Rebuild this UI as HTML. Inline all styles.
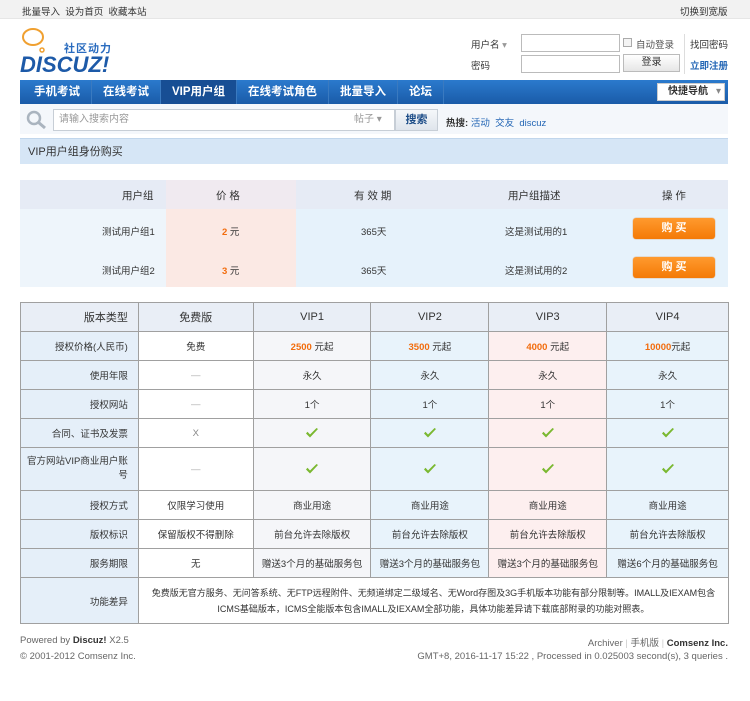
<!DOCTYPE html>
<html><head><meta charset="utf-8">
<style>
*{margin:0;padding:0;box-sizing:border-box}
body{width:750px;height:701px;background:#fff;font-family:"Liberation Sans","Noto Sans CJK SC",sans-serif;font-size:10px;color:#333;position:relative;overflow:hidden}
.a{position:absolute}
#top{left:0;top:0;width:750px;height:19px;background:#f2f2f2;border-bottom:1px solid #e6e6e6}
a{color:#333;text-decoration:none}
.nav{left:20px;top:80px;width:708px;height:24px;background:linear-gradient(#2b7acd,#1a5ba8);}
.nav span{float:left;color:#fff;font-weight:bold;font-size:11.5px;line-height:24px;padding:0 11px;border-right:1px solid #3a7ac0}
.nav span.on{background:#174e94}
.sb{left:20px;top:104px;width:708px;height:30px;background:#f4f7fb;}
input{border:1px solid #bbb;background:#fff}
table{border-collapse:collapse}
.t2{left:20px;top:302px;width:709px}
.t2 td{border:1px solid #a0a0a0;text-align:center;font-size:9.5px;height:29px;color:#333}
.t2 td.l{text-align:right;padding-right:10px;background:#e5eff9}
.t2 tr.h td{font-weight:normal;font-size:11px}
.c0{background:#fff}.c1{background:#f5f6f9}.c2{background:#e8f3fb}.c3{background:#fdefef}.c4{background:#e8f3fb}
.o{color:#f26c0d;font-weight:bold}
.ck svg{display:block;margin:0 auto}
.btn{display:inline-block;width:82px;height:21px;background:linear-gradient(#ff9a2e,#f47a06);border-radius:3px;color:#fff;font-weight:bold;line-height:21px;font-size:11px;box-shadow:0 0 1px #c60}
</style></head><body>
<svg width="0" height="0" style="position:absolute"><defs><symbol id="ck" viewBox="0 0 14 12"><path d="M1 6.5 L5 10.5 L13 2 L11.5 1 L5 7.5 L2.5 4.8 Z" fill="#7ab830"/></symbol></defs></svg>
<div id="top" class="a"></div>
<div class="a" style="left:22px;top:4px;font-size:9.5px">批量导入&nbsp; 设为首页&nbsp; 收藏本站</div>
<div class="a" style="left:680px;top:4px;font-size:9.5px">切换到宽版</div>
<svg class="a" style="left:20px;top:26px" width="100" height="50">
<ellipse cx="13" cy="11" rx="10" ry="8" fill="none" stroke="#f0a030" stroke-width="2"/>
<circle cx="22" cy="24" r="2" fill="none" stroke="#f0a030" stroke-width="1.5"/>
<text x="44" y="26" fill="#2a6cbf" font-size="11" font-weight="bold" font-family="Liberation Sans,Noto Sans CJK SC,sans-serif" letter-spacing="1">社区动力</text>
<text x="0" y="46" fill="#1d5aa8" font-size="22" font-weight="bold" font-style="italic" font-family="Liberation Sans,sans-serif">DISCUZ!</text>
</svg>
<div class="a" style="left:471px;top:37px;font-size:9.5px">用户名 <span style="color:#999">▾</span></div>
<div class="a" style="left:471px;top:58px;font-size:9.5px">密码</div>
<input class="a" style="left:521px;top:34px;width:99px;height:18px">
<input class="a" style="left:521px;top:55px;width:99px;height:18px">
<div class="a" style="left:623px;top:38px;width:9px;height:9px;border:1px solid #aaa;background:#f4f4f4"></div>
<div class="a" style="left:636px;top:37px;font-size:9.5px;color:#555">自动登录</div>
<div class="a" style="left:684px;top:34px;height:40px;border-left:1px solid #ddd"></div>
<div class="a" style="left:690px;top:37px;font-size:9.5px">找回密码</div>
<div class="a" style="left:690px;top:58px;font-size:9.5px;color:#2366b5;font-weight:bold">立即注册</div>
<div class="a" style="left:623px;top:54px;width:57px;height:18px;border:1px solid #bbb;background:linear-gradient(#fff,#e6e6e6);text-align:center;line-height:16px;font-size:10px">登录</div>
<div class="a nav"><span style="padding-left:14px">手机考试</span><span>在线考试</span><span class="on">VIP用户组</span><span>在线考试角色</span><span>批量导入</span><span>论坛</span></div>
<div class="a" style="left:657px;top:83px;width:68px;height:18px;background:#fff;border:1px solid #ccc;font-weight:bold;font-size:10px;line-height:16px;padding-left:10px">快捷导航 <span style="float:right;color:#888;padding-right:3px;font-weight:normal">▾</span></div>
<div class="a sb"></div>
<svg class="a" style="left:25px;top:110px" width="24" height="20"><circle cx="9" cy="8" r="6" fill="none" stroke="#aab4bf" stroke-width="2.5"/><line x1="13" y1="12" x2="20" y2="18" stroke="#aab4bf" stroke-width="3"/></svg>
<div class="a" style="left:53px;top:109px;width:342px;height:22px;background:#fff;border:1px solid #c7ced6;font-size:10px;color:#999;line-height:20px;padding-left:5px">请输入搜索内容<span style="position:absolute;left:300px;color:#999">帖子 ▾</span></div>
<div class="a" style="left:395px;top:109px;width:43px;height:22px;background:linear-gradient(#f5f7fa,#dfe5ec);border:1px solid #c7ced6;text-align:center;line-height:20px;font-weight:bold;font-size:11px;color:#1d4d88">搜索</div>
<div class="a" style="left:446px;top:115px;font-size:9.5px"><b>热搜:</b> <span style="color:#2366b5">活动&nbsp; 交友&nbsp; discuz</span></div>
<div class="a" style="left:20px;top:138px;width:708px;height:26px;background:#d6e6f6;border-top:1px solid #c1d6ec;font-size:11px;line-height:26px;padding-left:8px;color:#333">VIP用户组身份购买</div>
<div class="a" style="left:20px;top:180px;width:708px;height:107px;background:#e6f2fb"></div>
<div class="a" style="left:20px;top:180px;width:708px;height:29px;background:#e6ebf5"></div>
<div class="a" style="left:166px;top:209px;width:130px;height:78px;background:#fbe9e4"></div>
<div class="a" style="left:166px;top:180px;width:130px;height:29px;background:#f0eaf0"></div>
<div class="a" style="left:20px;top:209px;width:146px;height:78px;background:#eef5fb"></div>
<div class="a" style="top:188px;left:0;width:750px;font-size:10.5px">
<span class="a" style="left:122px">用户组</span><span class="a" style="left:216px">价 格</span><span class="a" style="left:354px">有 效 期</span><span class="a" style="left:508px">用户组描述</span><span class="a" style="left:662px">操 作</span></div>
<div class="a" style="top:224px;left:0;width:750px;font-size:9.5px"><span class="a" style="left:102px">测试用户组1</span><span class="a" style="left:222px"><b class="o">2</b> 元</span><span class="a" style="left:361px">365天</span><span class="a" style="left:505px">这是测试用的1</span></div>
<div class="a" style="top:263px;left:0;width:750px;font-size:9.5px"><span class="a" style="left:102px">测试用户组2</span><span class="a" style="left:222px"><b class="o">3</b> 元</span><span class="a" style="left:361px">365天</span><span class="a" style="left:505px">这是测试用的2</span></div>
<div class="a btn" style="left:633px;top:218px;text-align:center">购 买</div>
<div class="a btn" style="left:633px;top:257px;text-align:center">购 买</div>
<table class="a t2">
<colgroup><col style="width:118px"><col style="width:115px"><col style="width:118px"><col style="width:118px"><col style="width:118px"><col style="width:122px"></colgroup>
<tr class="h" style="background:#e9eef6"><td class="l" style="background:#e9eef6">版本类型</td><td>免费版</td><td>VIP1</td><td>VIP2</td><td>VIP3</td><td>VIP4</td></tr>
<tr><td class="l">授权价格(人民币)</td><td class="c0">免费</td><td class="c1"><b class="o">2500</b> 元起</td><td class="c2"><b class="o">3500</b> 元起</td><td class="c3"><b class="o">4000</b> 元起</td><td class="c4"><b class="o">10000</b>元起</td></tr>
<tr><td class="l">使用年限</td><td class="c0" style="color:#aaa">—</td><td class="c1">永久</td><td class="c2">永久</td><td class="c3">永久</td><td class="c4">永久</td></tr>
<tr><td class="l">授权网站</td><td class="c0" style="color:#aaa">—</td><td class="c1">1个</td><td class="c2">1个</td><td class="c3">1个</td><td class="c4">1个</td></tr>
<tr><td class="l">合同、证书及发票</td><td class="c0" style="color:#888">X</td><td class="c1 ck"><svg width="14" height="12"><use href="#ck"/></svg></td><td class="c2 ck"><svg width="14" height="12"><use href="#ck"/></svg></td><td class="c3 ck"><svg width="14" height="12"><use href="#ck"/></svg></td><td class="c4 ck"><svg width="14" height="12"><use href="#ck"/></svg></td></tr>
<tr style="height:43px"><td class="l" style="line-height:14px;padding-left:2px">官方网站VIP商业用户账号</td><td class="c0" style="color:#aaa">—</td><td class="c1 ck"><svg width="14" height="12"><use href="#ck"/></svg></td><td class="c2 ck"><svg width="14" height="12"><use href="#ck"/></svg></td><td class="c3 ck"><svg width="14" height="12"><use href="#ck"/></svg></td><td class="c4 ck"><svg width="14" height="12"><use href="#ck"/></svg></td></tr>
<tr><td class="l">授权方式</td><td class="c0">仅限学习使用</td><td class="c1">商业用途</td><td class="c2">商业用途</td><td class="c3">商业用途</td><td class="c4">商业用途</td></tr>
<tr><td class="l">版权标识</td><td class="c0">保留版权不得删除</td><td class="c1">前台允许去除版权</td><td class="c2">前台允许去除版权</td><td class="c3">前台允许去除版权</td><td class="c4">前台允许去除版权</td></tr>
<tr><td class="l">服务期限</td><td class="c0">无</td><td class="c1">赠送3个月的基础服务包</td><td class="c2">赠送3个月的基础服务包</td><td class="c3">赠送3个月的基础服务包</td><td class="c4">赠送6个月的基础服务包</td></tr>
<tr style="height:46px"><td class="l">功能差异</td><td colspan="5" style="background:#fff;line-height:16px;font-size:9px;padding:0 2px">免费版无官方服务、无问答系统、无FTP远程附件、无频道绑定二级域名、无Word存图及3G手机版本功能有部分限制等。IMALL及IEXAM包含ICMS基础版本，ICMS全能版本包含IMALL及IEXAM全部功能，具体功能差异请下载底部附录的功能对照表。</td></tr>
</table>
<div class="a" style="left:20px;top:635px;font-size:9.5px;color:#666">Powered by <b style="color:#333">Discuz!</b> X2.5</div>
<div class="a" style="left:20px;top:651px;font-size:9.5px;color:#666">© 2001-2012 Comsenz Inc.</div>
<div class="a" style="right:22px;top:635px;font-size:9.5px;color:#666">Archiver <span style="color:#ccc">|</span> 手机版 <span style="color:#ccc">|</span> <b style="color:#333">Comsenz Inc.</b></div>
<div class="a" style="right:22px;top:651px;font-size:9.5px;color:#666">GMT+8, 2016-11-17 15:22 , Processed in 0.025003 second(s), 3 queries .</div>
</body></html>
